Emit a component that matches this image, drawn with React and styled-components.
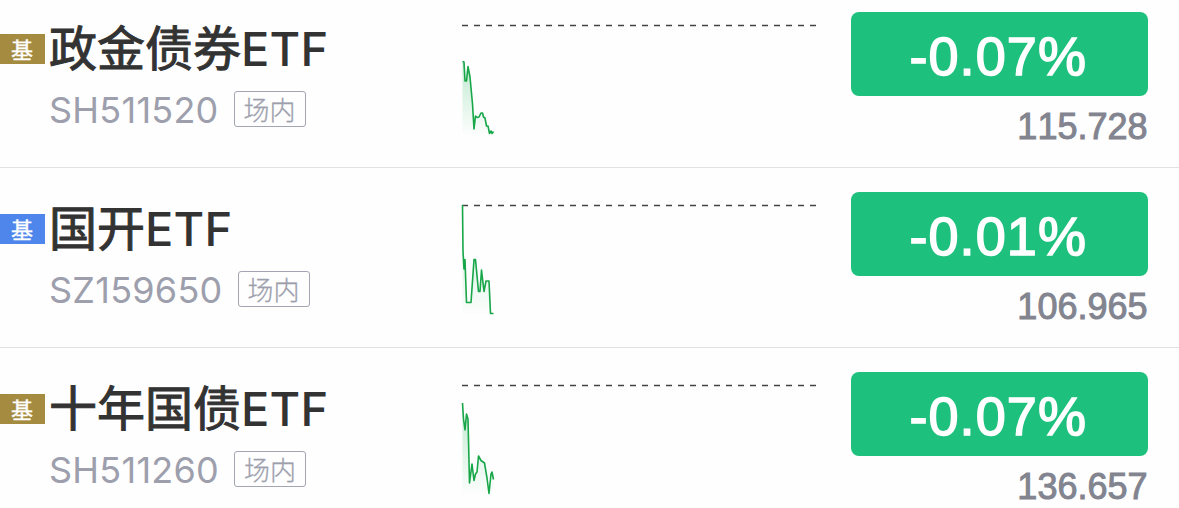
import React from "react"
import styled, { createGlobalStyle } from "styled-components"

const FUNDS = [
  {
    name: "政金债券",
    code: "SH511520",
    badge: "#a58b40",
    change: "-0.07%",
    price: "115.728",
    line: "0.5,36.5 2,37 3,56 4.5,56 6,41.5 8,52 10.5,79 12,104 13.5,91 15,92.5 17,92 19,88 20.5,88 21.5,92 23,93 24.5,101 26,101 27.5,108.5 29,106 30,108.5 31.5,106.5",
  },
  {
    name: "国开",
    code: "SZ159650",
    badge: "#4f86ec",
    change: "-0.01%",
    price: "106.965",
    line: "0.5,0 1,46 2,64 3,54.5 4.5,97.5 9,97.5 12,54.5 13.5,54.5 16.5,86.5 18,86.5 19.5,65 22,86.5 24,76 27,76 28.5,108.5 31.5,108.5",
  },
  {
    name: "十年国债",
    code: "SH511260",
    badge: "#a58b40",
    change: "-0.07%",
    price: "136.657",
    line: "0.5,18 1.5,34 3,45 4.5,29 6,34 7.5,98 10,79 12,95.5 13.5,89 15,87 16.5,71 19,75.5 22.5,78 25,93 27,108.5 29,89 30,87 31.5,94.5",
  },
]

const Sparkline = ({ id, line }) => (
  <Chart width="356" height="132" viewBox="0 0 356 132">
    <defs>
      <linearGradient id={id} x1="0" y1="0" x2="0" y2="1">
        <stop offset="0" stopColor="#1fb457" stopOpacity="0.28" />
        <stop offset="1" stopColor="#1fb457" stopOpacity="0" />
      </linearGradient>
    </defs>
    <polygon points={`0.5,112 ${line} 31.5,112`} fill={`url(#${id})`} />
    <path d="M0 0.5H355" stroke="#444" strokeWidth="1.3" strokeDasharray="6 6" />
    <polyline
      points={line}
      fill="none"
      stroke="#17a648"
      strokeWidth="1.6"
      strokeLinejoin="round"
    />
  </Chart>
)

const FundRow = ({ fund }) => (
  <Row>
    <Badge color={fund.badge}>基</Badge>
    <Info>
      <Name>
        {fund.name}
        <span>ETF</span>
      </Name>
      <Meta>
        <Code>{fund.code}</Code>
        <Tag>场内</Tag>
      </Meta>
    </Info>
    <Sparkline id={`fill-${fund.code}`} line={fund.line} />
    <Quote>
      <Change>{fund.change}</Change>
      <Price>{fund.price}</Price>
    </Quote>
  </Row>
)

const App = () => (
  <>
    <GlobalStyle />
    <List>
      {FUNDS.map(fund => (
        <FundRow key={fund.code} fund={fund} />
      ))}
    </List>
  </>
)

export default App

const GlobalStyle = createGlobalStyle`
  body {
    margin: 0;
    background: #fefefe;
    overflow: hidden;
  }
  * {
    box-sizing: border-box;
  }
`

const List = styled.div`
  width: 1179px;
  height: 508px;
  overflow: hidden;
  font-family: Inter, "Noto Sans CJK SC", sans-serif;
`

const Row = styled.div`
  display: flex;
  align-items: flex-start;
  height: 180px;
  padding: 24px 31px 0 0;
  border-bottom: 1px solid #e2e2e4;
  &:first-child {
    height: 168px;
    padding-top: 12px;
  }
`

const Badge = styled.div`
  width: 45px;
  height: 30px;
  margin-top: 22px;
  padding-right: 1px;
  background: ${p => p.color};
  color: #fff;
  font-family: "Noto Sans CJK SC", sans-serif;
  font-size: 22px;
  font-weight: 400;
  line-height: 29px;
  text-align: center;
  -webkit-text-stroke: 0.4px #fff;
`

const Info = styled.div`
  width: 417px;
  padding: 5px 0 0 4px;
`

const Name = styled.div`
  height: 56px;
  color: #333;
  font-family: "Noto Sans CJK SC", sans-serif;
  font-size: 48px;
  font-weight: 400;
  line-height: 56px;
  white-space: nowrap;
  -webkit-text-stroke: 1px #333;
  span {
    font-family: Inter, sans-serif;
    font-size: 47px;
    font-weight: 500;
    letter-spacing: 0.2px;
    -webkit-text-stroke: 0;
  }
`

const Meta = styled.div`
  display: flex;
  align-items: center;
  margin-top: 18px;
  height: 36px;
`

const Code = styled.div`
  color: #9d9fad;
  font-size: 36px;
  letter-spacing: 0.25px;
  line-height: 38px;
  padding-top: 2px;
`

const Tag = styled.div`
  width: 72px;
  height: 36px;
  margin-left: 15px;
  border: 1px solid #a3a5b3;
  border-radius: 3px;
  color: #9d9fad;
  font-family: "Noto Sans CJK SC", sans-serif;
  font-size: 26px;
  font-weight: 300;
  line-height: 34px;
  text-align: center;
  -webkit-text-stroke: 0.3px #9d9fad;
`

const Chart = styled.svg`
  display: block;
  flex: none;
  margin-top: 13px;
  overflow: visible;
`

const Quote = styled.div`
  width: 297.5px;
  margin-left: auto;
  font-family: "Liberation Sans", sans-serif;
  font-kerning: none;
`

const Change = styled.div`
  height: 84px;
  border-radius: 8px;
  background: #1ec07d;
  color: #fff;
  font-size: 54px;
  letter-spacing: 1.1px;
  line-height: 88px;
  text-align: center;
  text-indent: -2px;
  -webkit-text-stroke: 1.5px #fff;
`

const Price = styled.div`
  margin-top: 11px;
  padding-right: 0.5px;
  color: #82848f;
  font-size: 36px;
  line-height: 40px;
  text-align: right;
  -webkit-text-stroke: 1px #82848f;
`
